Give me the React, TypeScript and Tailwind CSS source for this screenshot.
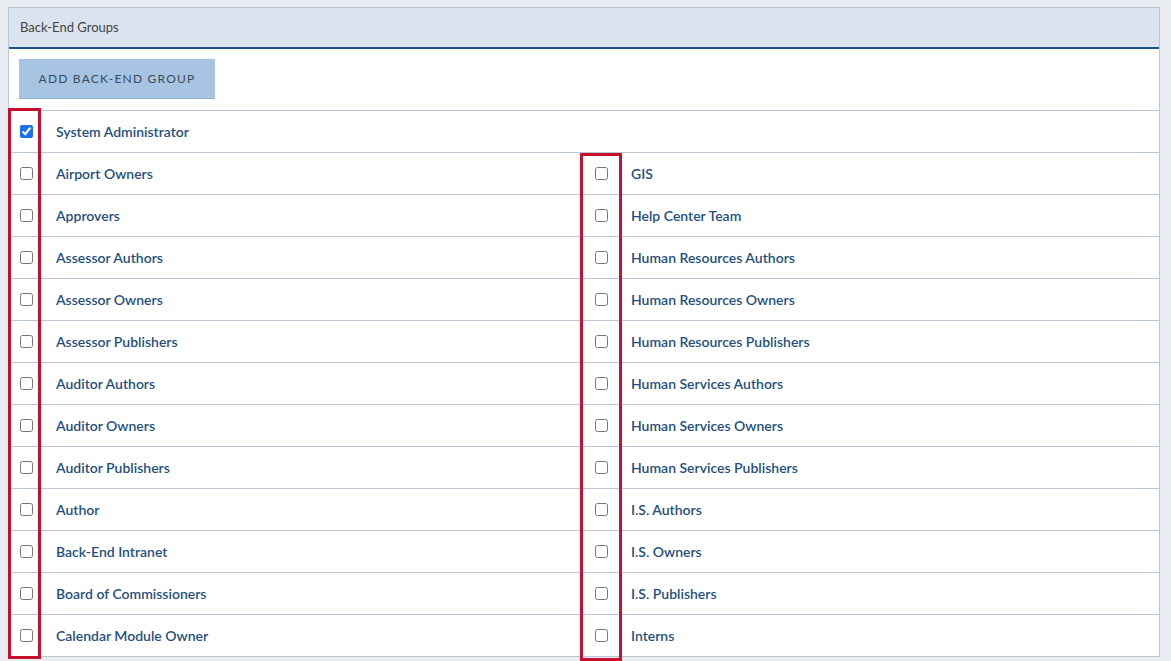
const left = [
  'Airport Owners',
  'Approvers',
  'Assessor Authors',
  'Assessor Owners',
  'Assessor Publishers',
  'Auditor Authors',
  'Auditor Owners',
  'Auditor Publishers',
  'Author',
  'Back-End Intranet',
  'Board of Commissioners',
  'Calendar Module Owner',
];

const right = [
  'GIS',
  'Help Center Team',
  'Human Resources Authors',
  'Human Resources Owners',
  'Human Resources Publishers',
  'Human Services Authors',
  'Human Services Owners',
  'Human Services Publishers',
  'I.S. Authors',
  'I.S. Owners',
  'I.S. Publishers',
  'Interns',
];

const Cell = ({ label, checked }: { label?: string; checked?: boolean }) => (
  <div className="flex h-[41px] items-center pl-[11px]">
    {label && (
      <>
        <input type="checkbox" defaultChecked={checked} className="m-0 h-[13px] w-[13px] accent-[#1a73e8]" />
        <span className="ml-[23px] text-[14px] font-semibold text-[#1f4f7f]">{label}</span>
      </>
    )}
  </div>
);

export default function App() {
  return (
    <div className="relative h-[661px] overflow-hidden bg-[#e9edf2] pl-2 pr-[11px] pt-[7px]" style={{ fontFamily: 'Lato, "Open Sans", sans-serif' }}>
      <div className="border border-[#b9c6d6] bg-white">
        <div className="flex h-[41px] items-center border-b-2 border-[#1d5587] bg-[#dae3ef] px-[11px] text-[13px] text-[#444]">
          Back-End Groups
        </div>
        <div className="px-[10px] pb-[11px] pt-[10px]">
          <button className="h-[40px] w-[196px] border-b border-[#8fb0d2] bg-[#a7c5e3] text-[12px] tracking-[1.2px] text-[#3a4a5a]">
            ADD BACK-END GROUP
          </button>
        </div>
        <div className="grid grid-cols-2">
          <div className="border-t border-[#b9c6d6]"><Cell label="System Administrator" checked /></div>
          <div className="border-t border-[#b9c6d6]"><Cell /></div>
          {left.map((l, i) => (
            <div key={l} className="contents">
              <div className="border-t border-[#b9c6d6]"><Cell label={l} /></div>
              <div className="border-t border-[#b9c6d6]"><Cell label={right[i]} /></div>
            </div>
          ))}
        </div>
      </div>
      <div className="absolute left-[8px] top-[108px] h-[551px] w-[33px] border-[3px] border-[#c8102e]" />
      <div className="absolute left-[580px] top-[153px] h-[508px] w-[42px] border-[3px] border-[#c8102e]" />
    </div>
  );
}
